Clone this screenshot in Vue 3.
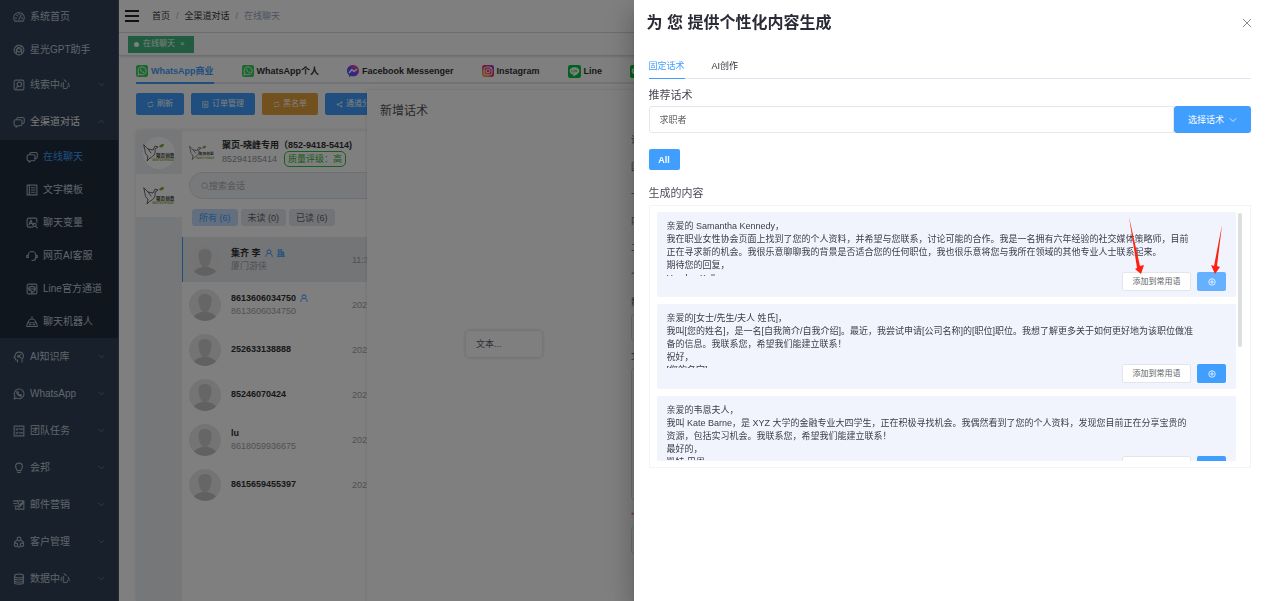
<script setup>
import { ref } from 'vue'

const icons = {
  gauge: 'M2.6 13.5A7 7 0 1 1 13.4 13.5ZM8 11L11 5M3 9.5h1.5M11.5 9.5H13M5 5.5l1 1M8 3v1.5',
  spiral: 'M8 1.5a6.5 6.5 0 1 0 0 13a6.5 6.5 0 1 0 0-13M5 3.500l6.500 3.500v5M11 3.500L4.500 7v5M8 5.500l2.500 1.500v2.500L8 11L5.500 9.500V7z',
  clue: 'M3.500 1.500h9a2 2 0 0 1 2 2v9a2 2 0 0 1-2 2h-9a2 2 0 0 1-2-2v-9a2 2 0 0 1 2-2zM8.500 4a3 3 0 1 0 0 6a3 3 0 1 0 0-6M6.500 9.500L4 12.500',
  chat: 'M5 5V4a2 2 0 0 1 2-2h6a2 2 0 0 1 2 2v4a2 2 0 0 1-2 2M3.500 5H10a2 2 0 0 1 2 2v4a2 2 0 0 1-2 2H6.500L4 15v-2h-.5a2 2 0 0 1-2-2V7a2 2 0 0 1 2-2z',
  doc: 'M1.500 1.500h13v13h-13zM4.500 1.500v13M7 5h5M7 8h5M7 11h5',
  letter: 'M9 13.500H3.500a2 2 0 0 1-2-2v-8a2 2 0 0 1 2-2h9a2 2 0 0 1 2 2V7M4 10.500L6.500 4L9 10.500M5 8.500h3M11.500 8.500a2 2 0 1 0 0 4a2 2 0 1 0 0-4M13 12.500l2 2',
  headset: 'M3 10V7a5 5 0 0 1 10 0v3a4 4 0 0 1-4 4H8M3 7H2a1 1 0 0 0-1 1v2h2M13 7h1a1 1 0 0 1 1 1v2h-2',
  line: 'M3.500 1.500h9a2 2 0 0 1 2 2v9a2 2 0 0 1-2 2h-9a2 2 0 0 1-2-2v-9a2 2 0 0 1 2-2zM8 4.500c-3 0-4.500 1.500-4.500 3.200S5 10.500 7.500 10.800V13c3-1.500 5-3.500 5-5.300S11 4.500 8 4.500zM5.500 7v1.500M8 7v1.500M10.500 7v1.500',
  robot: 'M8 1v3M3 9a5 5 0 0 1 10 0M2 9h12l1 5H1zM4.500 11.500h2M9.500 11.500h2',
  brain: 'M6 14.500V12H4.500a1.500 1.500 0 0 1-1.500-1.500V9L1.500 8.500L3 6a5 5 0 0 1 5-4.500h1A5 5 0 0 1 14 6.500c0 2-1 3-2 4v4M7 7l4-2.500M7 7l3.500 2M7 6a1 1 0 1 0 0 2a1 1 0 1 0 0-2',
  whatsapp: 'M1.500 14.500l1-3.500a6.500 6.500 0 1 1 2.500 2.500zM5.500 4.500c-1.500 1.500.5 4 2 5.200c1.500 1.300 3.200 1.800 4 .3L9.800 8.700L8.800 9.500C7.800 9 7 8 6.600 7.200L7.200 6.300z',
  tasks: 'M1.500 1.500h13v13h-13zM4 5.500l1 1l1.500-2M8.500 5.500H13M4 10.500l1 1l1.500-2M8.500 10.500H13',
  bulb: 'M5.500 11.500C5.500 9.500 3.500 9 3.500 6a4.500 4.500 0 0 1 9 0c0 3-2 3.500-2 5.500zM6 14h4',
  mail: 'M4 2.500h10.500v11H3.500M0.500 2.500h5L8.500 8l5.500-4.500M1 6h4M6 9l2 2l6-6M2.500 9.500h2M3.500 13.500v-2',
  people: 'M8 1.500a2.500 2.500 0 1 0 0 5a2.500 2.500 0 1 0 0-5M4 9.500a2.300 2.300 0 1 0 0 4.600a2.300 2.300 0 1 0 0-4.600M12 9.500a2.300 2.300 0 1 0 0 4.600a2.300 2.300 0 1 0 0-4.600M4.500 6C3 7 2 8 2 9M11.500 6C13 7 14 8 14 9M7 14.500h2',
  data: 'M2 4c0-3.300 12-3.300 12 0s-12 3.300-12 0v8.500c0 3 12 3 12 0V4M2 7c0 3 12 3 12 0M2 10c0 3 12 3 12 0',
  down: 'M2 5l6 6l6-6',
  up: 'M2 11l6-6l6 6',
  refresh: 'M2.500 8V5.500a2 2 0 0 1 2-2H12M10 1.500l2.500 2M13.500 8v2.500a2 2 0 0 1-2 2H4M6 14.500l-2.500-2',
  order: 'M2.500 1.500h11v13h-11zM5 5h3M5 8h6M5 11h6',
  share: 'M12.500 3.500L4 8l8.500 4.500M12.500 2a1.500 1.500 0 1 0 0 3a1.500 1.500 0 1 0 0-3M4 6.500a1.500 1.500 0 1 0 0 3a1.500 1.500 0 1 0 0-3M12.500 11a1.500 1.500 0 1 0 0 3a1.500 1.500 0 1 0 0-3',
  user: 'M8 1.500a4 4 0 1 0 0 8a4 4 0 1 0 0-8M1.500 15c0-4 2.500-6 4.500-6M14.500 15c0-4-2.500-6-4.500-6',
  building: 'M2.500 14.500v-13h7v13M9.500 6.500h4v8M1 14.500h14M5 5h2M5 8h2M5 11h2M11.500 9v3',
  search: 'M7 1.500a5.500 5.500 0 1 0 0 11a5.500 5.500 0 1 0 0-11M11 11l4 4',
  close: 'M2 2l12 12M14 2L2 14',
  plus: 'M8 1.500a6.500 6.500 0 1 0 0 13a6.500 6.500 0 1 0 0-13M8 5v6M5 8h6'
}

const topMenu = [
  { icon: 'gauge', label: '系统首页' },
  { icon: 'spiral', label: '星光GPT助手' }
]
const groupsBefore = [
  { icon: 'clue', label: '线索中心' },
  { icon: 'chat', label: '全渠道对话', open: true }
]
const subMenu = [
  { icon: 'chat', label: '在线聊天', active: true },
  { icon: 'doc', label: '文字模板' },
  { icon: 'letter', label: '聊天变量' },
  { icon: 'headset', label: '网页AI客服' },
  { icon: 'line', label: 'Line官方通道' },
  { icon: 'robot', label: '聊天机器人' }
]
const groupsAfter = [
  { icon: 'brain', label: 'AI知识库' },
  { icon: 'whatsapp', label: 'WhatsApp' },
  { icon: 'tasks', label: '团队任务' },
  { icon: 'bulb', label: '会邦' },
  { icon: 'mail', label: '邮件营销' },
  { icon: 'people', label: '客户管理' },
  { icon: 'data', label: '数据中心' }
]
const channels = [
  { kind: 'wa', label: 'WhatsApp商业', active: true },
  { kind: 'wa', label: 'WhatsApp个人' },
  { kind: 'fb', label: 'Facebook Messenger' },
  { kind: 'ig', label: 'Instagram' },
  { kind: 'ln', label: 'Line' },
  { kind: 'wc', label: '微信' }
]
const actions = [
  { icon: 'refresh', label: '刷新' },
  { icon: 'order', label: '订单管理' },
  { icon: 'refresh', label: '黑名单', warn: true },
  { icon: 'share', label: '通道分配' }
]
const filters = ['所有 (6)', '未读 (0)', '已读 (6)']
const chats = [
  { name: '集齐 李', sub: '厦门游侠', time: '11:30', badges: ['user', 'building'], active: true },
  { name: '8613606034750', sub: '8613606034750', time: '2023', badges: ['user'] },
  { name: '252633138888', time: '2023', badges: [] },
  { name: '85246070424', time: '2023', badges: [] },
  { name: 'lu', sub: '8618059936675', time: '2023', badges: [] },
  { name: '8615659455397', time: '2023', badges: [] }
]
const messages = [
  [
    '亲爱的 Samantha Kennedy，',
    '我在职业女性协会页面上找到了您的个人资料，并希望与您联系，讨论可能的合作。我是一名拥有六年经验的社交媒体策略师，目前',
    '正在寻求新的机会。我很乐意聊聊我的背景是否适合您的任何职位，我也很乐意将您与我所在领域的其他专业人士联系起来。',
    '期待您的回复，',
    'Hayden Kelly'
  ],
  [
    '亲爱的[女士/先生/夫人 姓氏]，',
    '我叫[您的姓名]，是一名[自我简介/自我介绍]。最近，我尝试申请[公司名称]的[职位]职位。我想了解更多关于如何更好地为该职位做准',
    '备的信息。我联系您，希望我们能建立联系！',
    '祝好，',
    '[您的名字]'
  ],
  [
    '亲爱的韦恩夫人，',
    '我叫 Kate Barne，是 XYZ 大学的金融专业大四学生，正在积极寻找机会。我偶然看到了您的个人资料，发现您目前正在分享宝贵的',
    '资源，包括实习机会。我联系您，希望我们能建立联系！',
    '最好的，',
    '凯特 巴恩'
  ]
]
const script = ref('求职者')
</script>

<template>
  <div class="app">
    <aside class="sidebar">
      <nav>
        <a v-for="m in topMenu" :key="m.label" href="#" class="item">
          <svg class="ico" viewBox="0 0 16 16"><path :d="icons[m.icon]" /></svg>{{ m.label }}
        </a>
        <a v-for="m in groupsBefore" :key="m.label" href="#" class="item group" :class="{ open: m.open }">
          <svg class="ico" viewBox="0 0 16 16"><path :d="icons[m.icon]" /></svg>{{ m.label }}
          <svg class="caret" viewBox="0 0 16 16"><path :d="m.open ? icons.up : icons.down" /></svg>
        </a>
        <div class="submenu">
          <a v-for="m in subMenu" :key="m.label" href="#" class="item sub" :class="{ active: m.active }">
            <svg class="ico" viewBox="0 0 16 16"><path :d="icons[m.icon]" /></svg>{{ m.label }}
          </a>
        </div>
        <a v-for="m in groupsAfter" :key="m.label" href="#" class="item group">
          <svg class="ico" viewBox="0 0 16 16"><path :d="icons[m.icon]" /></svg>{{ m.label }}
          <svg class="caret" viewBox="0 0 16 16"><path :d="icons.down" /></svg>
        </a>
      </nav>
    </aside>

    <main class="main">
      <header class="topbar">
        <button class="burger" aria-label="菜单"><i></i><i></i><i></i></button>
        <a href="#">首页</a><span class="slash">/</span><a href="#">全渠道对话</a><span class="slash">/</span><span class="here">在线聊天</span>
      </header>
      <div class="tags">
        <a href="#" class="tag"><i class="dot"></i>在线聊天<span class="x">×</span></a>
      </div>
      <section class="content">
        <nav class="channels">
          <a v-for="c in channels" :key="c.label" href="#" class="channel" :class="{ active: c.active }">
            <svg v-if="c.kind === 'wa'" class="logo" viewBox="0 0 24 24">
              <rect width="24" height="24" rx="4" fill="#35d15a" />
              <path d="M4 20l1.200-4.200a8 8 0 1 1 3 3z" fill="none" stroke="#fff" stroke-width="1.800" />
              <path d="M9 7.500c-2 2 .5 5 2.500 6.700c2 1.700 4 2 5 .3l-2.200-1.700l-1.300 1c-1-.5-2-1.600-2.500-2.600l.8-1.200z" fill="#fff" />
            </svg>
            <svg v-else-if="c.kind === 'fb'" class="logo" viewBox="0 0 24 24">
              <defs><linearGradient id="fb" x1="0" y1="1" x2="1" y2="0"><stop offset="0" stop-color="#1478ff" /><stop offset=".5" stop-color="#8b3cff" /><stop offset="1" stop-color="#ff5f7a" /></linearGradient></defs>
              <path d="M12 0C5 0 0 5 0 11.500c0 3.500 1.500 6.500 4 8.500v4l3.500-2c1.400.5 3 .7 4.500.7c7 0 12-5 12-11.200S19 0 12 0z" fill="url(#fb)" />
              <path d="M5 15l4.500-6l4.500 4l5-4" fill="none" stroke="#fff" stroke-width="3" />
            </svg>
            <svg v-else-if="c.kind === 'ig'" class="logo" viewBox="0 0 24 24">
              <defs><linearGradient id="ig" x1="0" y1="1" x2="1" y2="0"><stop offset="0" stop-color="#ffc94a" /><stop offset=".5" stop-color="#f0325a" /><stop offset="1" stop-color="#8c35d8" /></linearGradient></defs>
              <rect width="24" height="24" rx="5" fill="url(#ig)" />
              <rect x="4" y="4" width="16" height="16" rx="5" fill="none" stroke="#fff" stroke-width="2" />
              <circle cx="12" cy="12" r="4" fill="none" stroke="#fff" stroke-width="2" /><circle cx="17" cy="7" r="1.200" fill="#fff" />
            </svg>
            <svg v-else class="logo big" viewBox="0 0 24 24">
              <rect width="24" height="24" rx="4" fill="#06c33c" />
              <path d="M12 4c-5 0-9 3-9 7c0 3.500 3 6 7 6.700V21c5-2.500 11-6 11-10c0-4-4-7-9-7z" fill="#fff" />
              <path d="M7 9v4h2M11 9v4M13 13V9l3 4V9" fill="none" stroke="#06c33c" />
            </svg>
            {{ c.label }}
          </a>
        </nav>
        <div class="actions">
          <button v-for="a in actions" :key="a.label" class="btn" :class="{ warn: a.warn }">
            <svg class="mini" viewBox="0 0 16 16"><path :d="icons[a.icon]" /></svg>{{ a.label }}
          </button>
        </div>
        <div class="workspace">
          <div class="accounts">
            <button v-for="n in 2" :key="n" class="account" :class="{ second: n === 2 }" aria-label="聚页创意">
              <svg viewBox="0 0 32 32">
                <circle cx="16" cy="16" r="16" fill="#fff" />
                <path d="M1 8l4 4l5 1l2-4l3 1l-3 2c1 5-2 8-5 9l-3 3l1-5c-2-1-3-3-3-5zM5 12l3 4" fill="none" stroke="#444" stroke-width=".8" />
                <path d="M16 10c1-3 3-3 5-3c0 3-2 4-5 3" fill="#86ad38" />
                <text x="13" y="20" font-size="4.600" font-weight="700" fill="#444">聚页创意</text>
                <text x="9" y="24" font-size="3.600" font-weight="700" font-style="italic" fill="#86ad38">WATCHPAGE</text>
              </svg>
            </button>
          </div>
          <div class="inbox">
            <div class="profile">
              <svg class="brand" viewBox="0 0 32 32">
                <path d="M1 8l4 4l5 1l2-4l3 1l-3 2c1 5-2 8-5 9l-3 3l1-5c-2-1-3-3-3-5zM5 12l3 4" fill="none" stroke="#444" stroke-width=".8" />
                <path d="M16 10c1-3 3-3 5-3c0 3-2 4-5 3" fill="#86ad38" />
                <text x="12" y="19" font-size="4.600" font-weight="700" fill="#444">聚页创意</text>
                <text x="9" y="23" font-size="3.600" font-weight="700" font-style="italic" fill="#86ad38">WATCHPAGE</text>
              </svg>
              <div>
                <div class="pname">聚页-晓峰专用（852-9418-5414)</div>
                <div class="pnum">85294185414<span class="quality">质量评级：高</span></div>
              </div>
            </div>
            <label class="search">
              <svg class="mini" viewBox="0 0 16 16"><path :d="icons.search" /></svg>
              <input type="text" placeholder="搜索会话" aria-label="搜索会话" />
            </label>
            <div class="filters">
              <button v-for="(f, i) in filters" :key="f" :class="{ on: i === 0 }">{{ f }}</button>
            </div>
            <ul class="chats">
              <li v-for="c in chats" :key="c.name" class="chat" :class="{ active: c.active }">
                <svg class="avatar" viewBox="0 0 32 32">
                  <circle cx="16" cy="16" r="16" fill="#e8e8e8" />
                  <path d="M5 27.500c2-3 5-3.500 8-4.500h6c3 1 6 1.500 8 4.500a16 16 0 0 1-22 0z" fill="#c2c2c2" />
                  <path d="M16 5c-4 0-6.500 2-6.500 6c0 4 1 8 3 10.500c2 2.500 5 2.500 7 0c2-2.500 3-6.500 3-10.500c0-4-2.500-6-6.500-6z" fill="#cdcdcd" />
                </svg>
                <div class="who">
                  <div class="name">{{ c.name }}
                    <svg v-for="b in c.badges" :key="b" class="badge" viewBox="0 0 16 16"><path :d="icons[b]" /></svg>
                  </div>
                  <div v-if="c.sub" class="subname">{{ c.sub }}</div>
                </div>
                <span class="time">{{ c.time }}</span>
              </li>
            </ul>
          </div>
        </div>
      </section>
    </main>

    <section class="editor">
      <div class="canvas">
        <h2>新增话术</h2>
        <div class="node">文本...</div>
      </div>
      <form class="fields">
        <p>请选择节点类型</p>
        <p>国家与地区</p>
        <p>一、填写说明</p>
        <p>内容变量</p>
        <p>二、发送设置</p>
        <p>个人设置</p>
        <label for="f-title">数据标题</label>
        <input id="f-title" type="text" />
        <label for="f-body">文本内容</label>
        <textarea id="f-body"></textarea>
        <label for="f-tag" class="req">* 标签</label>
        <input id="f-tag" type="text" />
      </form>
    </section>

    <div class="mask"></div>

    <section class="drawer" role="dialog" aria-labelledby="drawer-title">
      <header class="dhead">
        <h1 id="drawer-title">为 您 提供个性化内容生成</h1>
        <button aria-label="关闭"><svg viewBox="0 0 16 16"><path :d="icons.close" /></svg></button>
      </header>
      <div class="dbody">
        <nav class="dtabs">
          <a href="#" class="on">固定话术</a>
          <a href="#">AI创作</a>
        </nav>
        <label class="title" for="script">推荐话术</label>
        <div class="picker">
          <input id="script" v-model="script" type="text" />
          <button>选择话术<svg viewBox="0 0 16 16"><path :d="icons.down" /></svg></button>
        </div>
        <button class="all">All</button>
        <h3 class="title">生成的内容</h3>
        <div class="results">
          <div class="scroller">
            <article v-for="(m, i) in messages" :key="i" class="card">
              <div class="text"><p v-for="l in m" :key="l">{{ l }}</p></div>
              <div class="ops">
                <button class="save">添加到常用语</button>
                <button class="add" :class="{ hover: i === 0 }" aria-label="添加"><svg viewBox="0 0 16 16"><path :d="icons.plus" /></svg></button>
              </div>
            </article>
          </div>
          <div class="thumb"></div>
          <svg class="arrows" viewBox="0 0 110 60">
            <path d="M9 1L20 50L24 49L21 58L15 53L17 52Z" />
            <path d="M102 9L97 50L100 51L95 58L91 49L94 50Z" />
          </svg>
        </div>
      </div>
    </section>
  </div>
</template>

<style>
html,
body {
  background: #fff;
  overflow: hidden;
}
</style>

<style scoped>
* {
  box-sizing: border-box;
}
.app {
  display: flex;
  height: 100vh;
  overflow: hidden;
  background: #fff;
  color: #303133;
  font: 9px/12px "Liberation Sans", "Noto Sans CJK SC", sans-serif;
}
a {
  color: inherit;
  text-decoration: none;
}
button,
input,
textarea {
  font: inherit;
  color: inherit;
  margin: 0;
  padding: 0;
  border: 0;
  background: none;
  outline: 0;
}
h1, h2, h3, p, ul {
  margin: 0;
  padding: 0;
}
svg path {
  stroke-linecap: round;
  stroke-linejoin: round;
}
.ico, .caret, .mini, .badge, .dhead svg, .picker svg, .add svg {
  fill: none;
  stroke: currentColor;
  stroke-width: 1.5px;
  flex: none;
}

/* sidebar */
.sidebar {
  flex: none;
  width: 119px;
  background: #304156;
  border-right: 1px solid #47566a;
  overflow: hidden;
}
.item {
  display: flex;
  align-items: center;
  gap: 5px;
  height: 33px;
  padding: 0 13px;
  color: #bfcbd9;
  font-size: 10px;
  white-space: nowrap;
}
.ico {
  width: 12px;
  height: 12px;
  color: #a5b0bd;
}
.group {
  height: 37px;
}
.open {
  color: #f4f4f5;
}
.caret {
  width: 7px;
  height: 7px;
  margin-left: auto;
  color: #8490a0;
}
.submenu {
  background: #1f2d3d;
}
.sub {
  padding-left: 26px;
}
.sub.active {
  color: #409eff;
}

/* main page */
.main {
  flex: 1;
  min-width: 0;
  display: flex;
  flex-direction: column;
  overflow: hidden;
}
.topbar {
  display: flex;
  align-items: center;
  height: 33px;
  padding: 0 6px;
  border-bottom: 1px solid #d8dce5;
}
.burger {
  display: flex;
  flex-direction: column;
  gap: 3px;
  width: 14px;
  margin-right: 13px;
}
.burger i {
  height: 2px;
  background: #222;
}
.slash {
  margin: 0 6px;
  color: #aab2bd;
}
.here {
  color: #97a8be;
}
.tags {
  display: flex;
  align-items: center;
  height: 23px;
  padding: 0 9px;
  border-bottom: 1px solid #d8dce5;
  box-shadow: 0 1px 2px rgba(0, 0, 0, 0.12);
}
.tag {
  display: flex;
  align-items: center;
  height: 17px;
  padding: 0 9px 0 6px;
  background: #42b983;
  color: #fff;
  font-size: 8px;
}
.dot {
  width: 5px;
  height: 5px;
  margin-right: 4px;
  border-radius: 50%;
  background: #fff;
}
.x {
  margin-left: 5px;
}
.content {
  flex: 1;
  display: flex;
  flex-direction: column;
  min-height: 0;
  padding: 4px 0 0 17px;
}
.channels {
  display: flex;
  gap: 28px;
  border-bottom: 2px solid #e4e7ed;
  white-space: nowrap;
}
.channel {
  display: flex;
  align-items: center;
  gap: 3px;
  height: 24px;
  margin-bottom: -2px;
  border-bottom: 2px solid transparent;
  font-weight: 700;
}
.channel.active {
  color: #409eff;
  border-color: #409eff;
}
.logo {
  width: 12px;
  height: 12px;
}
.big {
  width: 13px;
  height: 13px;
}
.actions {
  display: flex;
  gap: 7px;
  padding: 9px 0;
}
.btn {
  display: flex;
  align-items: center;
  gap: 3px;
  height: 22px;
  padding: 0 11px;
  border-radius: 2px;
  background: #409eff;
  color: #fff;
  font-size: 8px;
  white-space: nowrap;
}
.warn {
  background: #e6a23c;
}
.mini {
  width: 7px;
  height: 7px;
}
.workspace {
  flex: 1;
  display: flex;
  min-height: 0;
  margin-top: 7px;
  box-shadow: 0 -1px 4px rgba(0, 0, 0, 0.1);
}
.accounts {
  width: 46px;
  background: #eceff2;
}
.account {
  display: flex;
  align-items: center;
  justify-content: center;
  width: 100%;
  height: 43px;
}
.account.second {
  background: #fff;
}
.account svg {
  width: 32px;
  height: 32px;
}
.account text,
.brand text {
  font-family: "Noto Sans CJK SC", sans-serif;
}
.inbox {
  flex: 1;
  min-width: 0;
}
.profile {
  display: flex;
  align-items: center;
  gap: 7px;
  height: 41px;
  padding: 3px 0 0 7px;
}
.brand {
  width: 26px;
  height: 26px;
}
.pname {
  font-weight: 700;
}
.pnum {
  display: flex;
  align-items: center;
  gap: 7px;
  color: #909399;
}
.quality {
  height: 16px;
  padding: 0 3px;
  border: 1px solid #2fc239;
  border-radius: 5px;
  color: #2fb239;
  line-height: 14px;
}
.search {
  display: flex;
  align-items: center;
  width: 240px;
  height: 27px;
  margin-left: 7px;
  padding: 0 11px;
  border: 1px solid #dcdfe6;
  border-radius: 14px;
  background: #f0f2f5;
  color: #a8abb2;
}
.search .mini {
  width: 8px;
  height: 8px;
}
.search input {
  flex: 1;
  min-width: 0;
}
.search input::placeholder {
  color: #a8abb2;
}
.filters {
  display: flex;
  gap: 3px;
  padding: 10px 10px 11px;
}
.filters button {
  height: 17px;
  padding: 0 7px;
  border-radius: 3px;
  background: #e4e7ec;
  color: #606266;
}
.filters .on {
  background: #c6dfff;
  color: #409eff;
}
.chats {
  list-style: none;
}
.chat {
  display: flex;
  align-items: center;
  gap: 10px;
  height: 45px;
  padding-left: 6px;
  border-left: 1px solid transparent;
}
.chat.active {
  background: #e9ebee;
  border-color: #409eff;
}
.avatar {
  flex: none;
  width: 32px;
  height: 32px;
}
.who {
  width: 111px;
  line-height: 13px;
}
.name {
  display: flex;
  align-items: center;
  gap: 4px;
  font-weight: 700;
}
.badge {
  width: 8px;
  height: 8px;
  color: #409eff;
  stroke-width: 2px;
}
.subname,
.time {
  color: #a0a3a9;
}

/* script editor lying over the page */
.editor {
  position: absolute;
  top: 90px;
  right: 0;
  bottom: 0;
  left: 367px;
  display: flex;
  background: #fff;
  box-shadow: 0 0 3px rgba(0, 0, 0, 0.15);
}
.canvas {
  position: relative;
  flex: none;
  width: 264px;
}
.canvas h2 {
  padding: 12px 13px;
  font-size: 12px;
  line-height: 18px;
  font-weight: 400;
  color: #505256;
}
.node {
  position: absolute;
  left: 99px;
  top: 241px;
  width: 76px;
  height: 26px;
  padding: 0 10px;
  border-radius: 4px;
  box-shadow: 0 0 4px rgba(0, 0, 0, 0.2);
  color: #606266;
  line-height: 26px;
}
.fields {
  flex: 1;
  padding-top: 38px;
  color: #606266;
}
.fields p {
  height: 27px;
  line-height: 24px;
}
.fields label {
  display: block;
  height: 24px;
  line-height: 24px;
}
.fields input,
.fields textarea {
  display: block;
  width: 90%;
  height: 27px;
  margin-bottom: 3px;
  border: 1px solid #dcdfe6;
  border-radius: 3px;
  resize: none;
}
.fields textarea {
  height: 132px;
}
.fields .req {
  color: #f56c6c;
}
.mask {
  position: fixed;
  inset: 0;
  background: rgba(0, 0, 0, 0.5);
}

/* generator drawer */
.drawer {
  position: fixed;
  top: 0;
  right: 0;
  bottom: 0;
  width: 50%;
  background: #fff;
  box-shadow: 0 8px 10px -5px rgba(0, 0, 0, 0.2), 0 16px 24px 2px rgba(0, 0, 0, 0.14), 0 6px 30px 5px rgba(0, 0, 0, 0.12);
}
.dhead {
  display: flex;
  align-items: center;
  justify-content: space-between;
  height: 45px;
  padding: 0 15px 0 13px;
}
.dhead h1 {
  font-size: 16px;
  line-height: 24px;
  color: #2b2b38;
}
.dhead button {
  width: 10px;
  height: 10px;
  color: #808389;
}
.dhead svg {
  display: block;
  width: 10px;
  height: 10px;
}
.dbody {
  padding: 8px 16px 8px 15px;
}
.dtabs {
  display: flex;
  gap: 27px;
  margin-bottom: 8px;
  border-bottom: 1px solid #dfe6f0;
}
.dtabs a {
  height: 26px;
  margin-bottom: -1px;
  line-height: 26px;
}
.dtabs .on {
  color: #409eff;
  border-bottom: 1px solid #409eff;
}
.title {
  display: block;
  font-size: 11px;
  line-height: 16px;
  font-weight: 400;
  color: #4a4d57;
}
.picker {
  display: flex;
  margin: 3px 0 16px;
}
.picker input {
  flex: 1;
  min-width: 0;
  height: 27px;
  padding: 0 10px;
  border: 1px solid #e4e7ed;
  border-radius: 3px 0 0 3px;
  color: #606266;
}
.picker button {
  display: flex;
  align-items: center;
  justify-content: center;
  gap: 5px;
  width: 77px;
  height: 27px;
  border-radius: 3px;
  background: #409eff;
  color: #fff;
}
.picker svg {
  width: 8px;
  height: 8px;
}
.all {
  display: block;
  width: 31px;
  height: 21px;
  margin-bottom: 15px;
  border-radius: 2px;
  background: #409eff;
  color: #fff;
  font-weight: 700;
}
.results {
  position: relative;
  margin-top: 4px;
  padding: 6px 14px 6px 7px;
  border: 1px solid #f3f4f6;
}
.scroller {
  height: 249px;
  overflow: hidden;
}
.card {
  height: 85px;
  margin-bottom: 7px;
  padding: 8px 10px;
  border-radius: 2px;
  background: #f1f4fd;
  color: #3a3d48;
}
.text {
  height: 56px;
  overflow: hidden;
  line-height: 13px;
  white-space: nowrap;
}
.ops {
  position: relative;
  display: flex;
  justify-content: flex-end;
  align-items: center;
  gap: 6px;
  margin-top: -4px;
}
.save {
  height: 19px;
  width: 69px;
  border: 1px solid #e2e5ec;
  border-radius: 2px;
  background: #fff;
  color: #606266;
  font-size: 8px;
}
.add {
  display: flex;
  align-items: center;
  justify-content: center;
  width: 29px;
  height: 19px;
  border-radius: 2px;
  background: #409eff;
  color: #fff;
}
.add.hover {
  background: #66b1ff;
}
.add svg {
  width: 8px;
  height: 8px;
}
.thumb {
  position: absolute;
  top: 7px;
  right: 8px;
  width: 4px;
  height: 134px;
  border-radius: 2px;
  background: #dddee0;
}
.arrows {
  position: absolute;
  top: 10px;
  right: 20px;
  width: 110px;
  height: 60px;
  fill: #ff2012;
}
</style>
